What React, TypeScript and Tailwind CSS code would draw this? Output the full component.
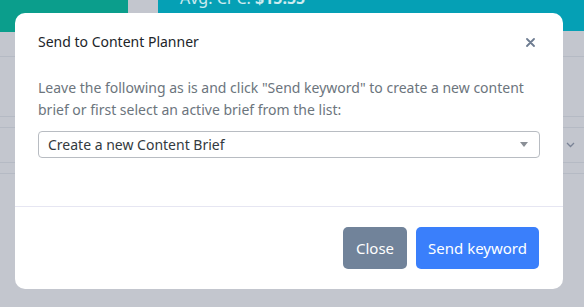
import React from 'react'

const font = { fontFamily: '"Noto Sans", "Open Sans", sans-serif' }

const Backdrop: React.FC = () => (
  <div className="absolute inset-0 bg-[#c3c6ce]">
    {/* Top stat cards */}
    <div className="flex h-[32px]">
      <div className="w-[128px] h-[32px] bg-[#0b9e8c]" />
      <div className="w-[30px]" />
      <div className="flex-1 h-[31px] bg-[#05a0b5] overflow-hidden">
        <div className="pl-[22px] -mt-[12px] text-[16px] text-white/80 leading-[20px]">
          Avg. CPC: <span className="font-bold">$15.55</span>
        </div>
      </div>
    </div>

    {/* Table rows */}
    <div className="h-[25px] border-b border-[#b5bac4]" />
    <div className="h-[60px] border-b border-[#b5bac4]" />
    <div className="h-[11px] border-b border-[#b5bac4]" />
    <div className="h-[35px] border-b border-[#b5bac4] flex items-center justify-end pr-[9px]">
      <svg width="9" height="6" viewBox="0 0 9 6" className="text-[#7a8396]">
        <path d="M1 1l3.5 3.5L8 1" fill="none" stroke="currentColor" strokeWidth="1.3" />
      </svg>
    </div>
    <div className="h-[11px] border-b border-[#b5bac4]" />
    <div className="h-[110px] flex items-end pl-[315px] pb-[2px]">
      <span className="text-[14px] text-[#5b6170]">18100</span>
    </div>
  </div>
)

const App: React.FC = () => {
  return (
    <div className="relative w-[584px] h-[307px] overflow-hidden" style={font}>
      <Backdrop />

      {/* Modal */}
      <div className="absolute left-[15px] top-[13px] w-[548px] h-[276px] bg-white rounded-[10px] flex flex-col">
        {/* Header */}
        <div className="flex items-center justify-between pl-[23px] pr-[28px] pt-[18px]">
          <h5 className="m-0 text-[14px] leading-[22px] text-[#212529]">Send to Content Planner</h5>
          <button className="bg-transparent border-0 p-0 text-[#6e7c91]" aria-label="Close">
            <svg width="9" height="9" viewBox="0 0 9 9">
              <path d="M1 1l7 7M8 1l-7 7" stroke="currentColor" strokeWidth="1.8" strokeLinecap="round" />
            </svg>
          </button>
        </div>

        {/* Body */}
        <div className="px-[23px] pt-[24px] flex-1">
          <p className="m-0 text-[14px] leading-[22px] text-[#6c757d]">
            Leave the following as is and click "Send keyword" to create a new content brief or first select an active
            brief from the list:
          </p>
          <div className="mt-[10px] h-[27px] border border-[#b8bcc2] rounded-[4px] flex items-center justify-between pl-[9px] pr-[11px]">
            <span className="text-[14px] text-[#333a40]">Create a new Content Brief</span>
            <svg width="8" height="5" viewBox="0 0 8 5">
              <path d="M0 0h8L4 5z" fill="#8a8f96" />
            </svg>
          </div>
        </div>

        {/* Footer */}
        <div className="border-t border-[#e6e6f2] flex justify-end gap-[9px] pt-[20px] pb-[20px] pr-[24px]">
          <button className="h-[42px] w-[64px] rounded-[5px] bg-[#71839a] text-white text-[15px]">Close</button>
          <button className="h-[42px] w-[123px] rounded-[5px] bg-[#3a7ffb] text-white text-[15px]">Send keyword</button>
        </div>
      </div>
    </div>
  )
}

export default App
